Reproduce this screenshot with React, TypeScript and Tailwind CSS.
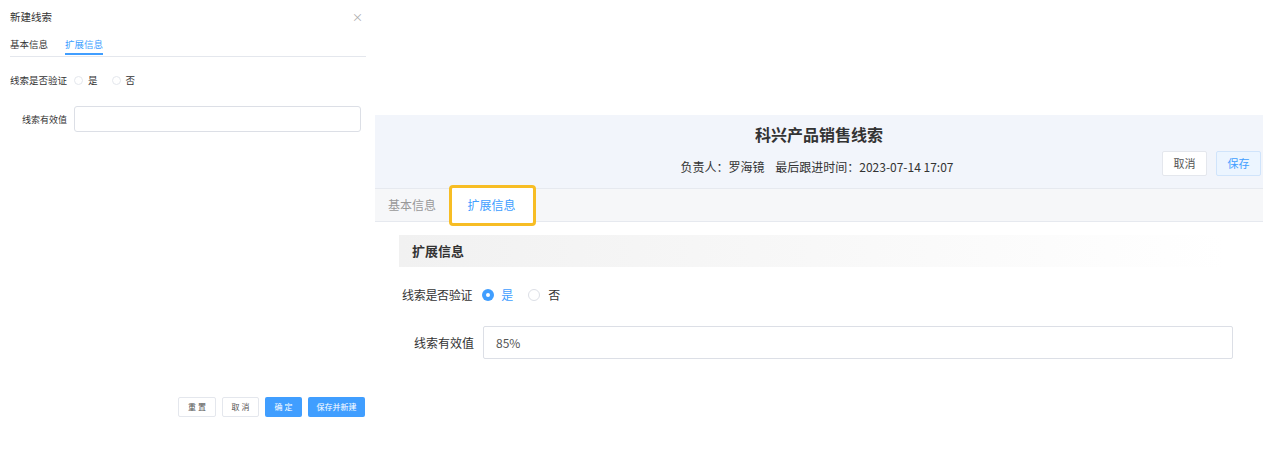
import React from "react";

const font = { fontFamily: '"Noto Sans CJK SC", "Noto Sans", sans-serif' };

function Radio({ checked }: { checked?: boolean }) {
  return checked ? (
    <span className="inline-flex h-[12px] w-[12px] items-center justify-center rounded-full bg-[#409eff]">
      <span className="h-[4px] w-[4px] rounded-full bg-white" />
    </span>
  ) : (
    <span className="inline-block h-[12px] w-[12px] rounded-full border border-[#dcdfe6] bg-white" />
  );
}

function SmallRadio() {
  return <span className="inline-block h-[9px] w-[9px] rounded-full border border-[#e4e7ed] bg-white" />;
}

function LeftPanel() {
  return (
    <div className="relative flex h-[454px] w-[375px] shrink-0 flex-col">
      <div className="flex h-[34px] items-center justify-between pl-[10px] pr-[12px]">
        <span className="text-[10.5px] text-[#333]">新建线索</span>
        <span className="text-[11px] leading-none text-[#aaa]">×</span>
      </div>
      <div className="mx-[10px] flex h-[23px] w-[356px] items-start gap-[17px] border-b border-[#e4e7ed] pt-[3px]">
        <span className="text-[9.5px] text-[#333]">基本信息</span>
        <span className="relative h-full text-[9.5px] text-[#409eff]">
          扩展信息
          <span className="absolute bottom-[1px] left-0 h-[2px] w-full bg-[#409eff]" />
        </span>
      </div>
      <div className="mt-[16px] flex items-center pl-[10px] text-[9.5px] text-[#333]">
        <span>线索是否验证</span>
        <span className="ml-[7px] flex items-center gap-[5px]">
          <SmallRadio />
          <span>是</span>
        </span>
        <span className="ml-[14px] flex items-center gap-[5px]">
          <SmallRadio />
          <span>否</span>
        </span>
      </div>
      <div className="mt-[19px] flex items-center">
        <span className="w-[74px] pr-[7px] text-right text-[9px] text-[#333]">线索有效值</span>
        <div className="h-[26px] w-[287px] rounded-[3px] border border-[#dcdfe6] bg-white" />
      </div>
      <div className="mt-auto mb-[37px] flex justify-end gap-[6px] pr-[10px] text-[8px]">
        <button className="h-[20px] w-[38px] rounded-[2px] border border-[#e4e7ed] bg-white text-[#555]">重 置</button>
        <button className="h-[20px] w-[37px] rounded-[2px] border border-[#e4e7ed] bg-white text-[#555]">取 消</button>
        <button className="h-[20px] w-[37px] rounded-[2px] bg-[#409eff] text-white">确 定</button>
        <button className="h-[20px] w-[57px] rounded-[2px] bg-[#409eff] text-white">保存并新建</button>
      </div>
    </div>
  );
}

function RightPanel() {
  return (
    <div className="flex h-[454px] flex-1 flex-col pt-[115px]">
      <div className="relative h-[73px] bg-[#f2f5fb]">
        <div className="pt-[9px] text-center text-[16px] font-bold leading-[20px] text-[#333]">科兴产品销售线索</div>
        <div className="mt-[15px] pr-[4px] text-center text-[12px] leading-[16px] text-[#333]">
          负责人：罗海镜&nbsp;&nbsp;&nbsp;&nbsp;最后跟进时间：2023-07-14 17:07
        </div>
        <div className="absolute right-[2px] top-[36px] flex gap-[9px] text-[11px]">
          <button className="h-[25px] w-[45px] rounded-[2px] border border-[#e4e7ed] bg-white text-[#555]">取消</button>
          <button className="h-[25px] w-[45px] rounded-[2px] border border-[#d0e4fb] bg-[#ecf5ff] text-[#409eff]">保存</button>
        </div>
      </div>
      <div className="relative flex h-[34px] items-center border-b border-t border-[#e6e9ef] bg-[#f6f7f9]">
        <span className="ml-[13px] text-[12px] text-[#999]">基本信息</span>
        <div className="relative ml-[13px] flex h-[41px] w-[87px] items-center justify-center rounded-[4px] border-[3px] border-[#f7bd24] bg-white pr-[2px]">
          <span className="text-[12px] text-[#409eff]">扩展信息</span>
        </div>
      </div>
      <div className="pl-[24px] pr-[30px] pt-[13px]">
        <div className="flex h-[32px] w-[826px] items-center bg-gradient-to-r from-[#f1f1f1] to-[#ffffff] pl-[13px] text-[13px] font-bold text-[#333]">
          扩展信息
        </div>
        <div className="mt-[19px] flex items-center pl-[3px] text-[12px] text-[#333]">
          <span className="tracking-[-0.3px]">线索是否验证</span>
          <span className="ml-[10px] flex items-center gap-[7px]">
            <Radio checked />
            <span className="text-[#409eff]">是</span>
          </span>
          <span className="ml-[15px] flex items-center gap-[8px]">
            <Radio />
            <span>否</span>
          </span>
        </div>
        <div className="mt-[22px] flex items-center">
          <span className="w-[84px] pr-[9px] text-right text-[12px] text-[#333]">线索有效值</span>
          <div className="flex h-[33px] w-[750px] items-center rounded-[2px] border border-[#dcdfe6] bg-white pl-[12px] text-[12px] text-[#555]">
            85%
          </div>
        </div>
      </div>
    </div>
  );
}

export default function App() {
  return (
    <div className="flex h-[454px] w-[1263px] overflow-hidden bg-white" style={font}>
      <LeftPanel />
      <RightPanel />
    </div>
  );
}
